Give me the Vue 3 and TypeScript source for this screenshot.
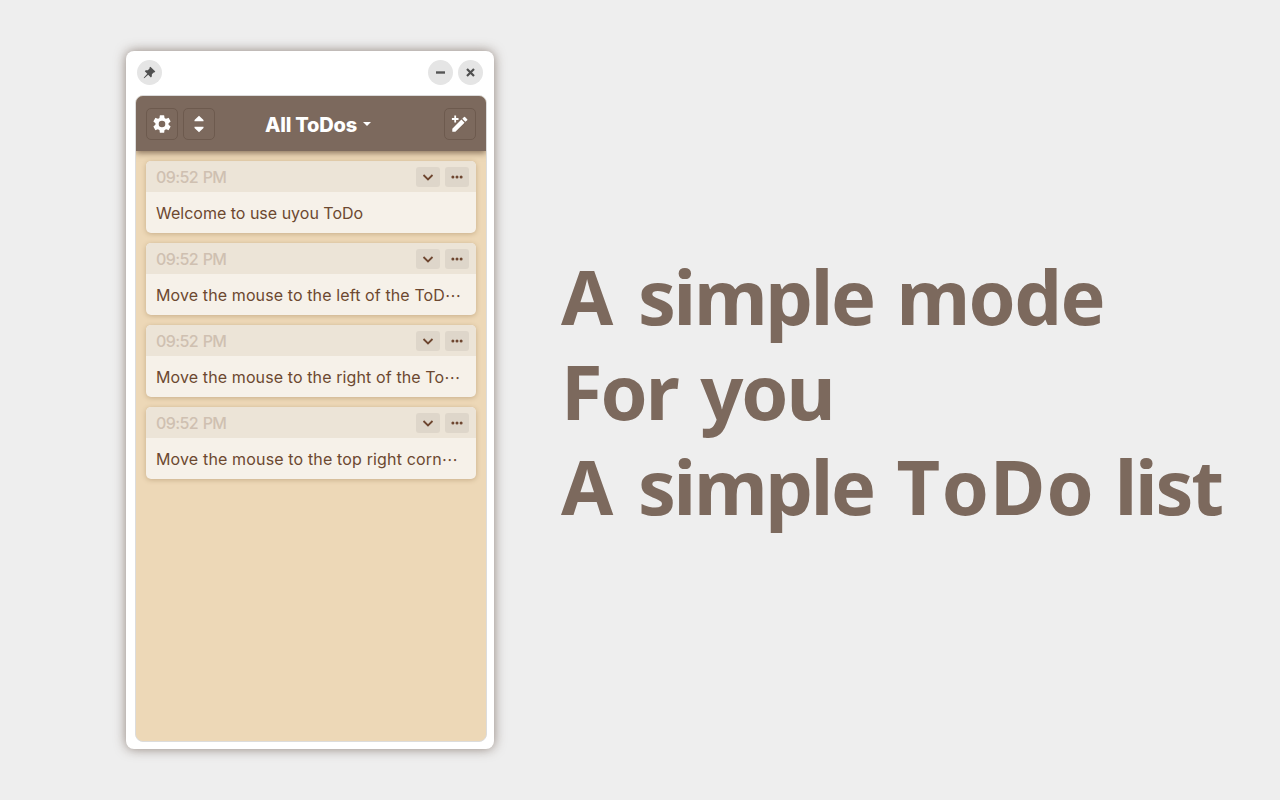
<script setup lang="ts">
interface Todo {
  time: string
  text: string
  cut: boolean
}

const todos: Todo[] = [
  { time: '09:52 PM', text: 'Welcome to use uyou ToDo', cut: false },
  { time: '09:52 PM', text: 'Move the mouse to the left of the ToD', cut: true },
  { time: '09:52 PM', text: 'Move the mouse to the right of the To', cut: true },
  { time: '09:52 PM', text: 'Move the mouse to the top right corn', cut: true },
]
</script>

<template>
  <main class="page">
    <section class="window">
      <div class="titlebar">
        <button class="round">
          <svg width="13" height="13" viewBox="0 0 13 13">
            <path d="M7.4 .7 12.3 5.6 11.3 6.6 10.7 6.4 8.9 8.3 8.8 10.5 7.9 11.4 5.2 8.7 1.5 12.1 .8 12.2 .9 11.5 4.3 7.8 1.8 5.3 2.7 4.3 4.9 4.2 6.7 2.3 6.4 1.7Z" fill="#4f4f4f" />
          </svg>
        </button>
        <span class="spacer" />
        <button class="round">
          <svg width="11" height="11" viewBox="0 0 11 11"><path d="M1 5.5h9" stroke="#555" stroke-width="2.4" /></svg>
        </button>
        <button class="round">
          <svg width="11" height="11" viewBox="0 0 11 11"><path d="M2 2l7 7M9 2l-7 7" stroke="#4f4f4f" stroke-width="2.2" /></svg>
        </button>
      </div>

      <div class="app">
        <header class="bar">
          <div class="side">
            <button class="tool">
              <svg width="22" height="22" viewBox="0 0 24 24">
                <path fill="#fff" d="M19.14 12.94c.04-.3.06-.61.06-.94s-.02-.64-.07-.94l2.03-1.58a.49.49 0 0 0 .12-.61l-1.92-3.32a.49.49 0 0 0-.59-.22l-2.39.96c-.5-.38-1.03-.7-1.62-.94L14.4 2.81a.48.48 0 0 0-.48-.41h-3.84a.47.47 0 0 0-.47.41l-.36 2.54c-.59.24-1.13.57-1.62.94l-2.39-.96a.47.47 0 0 0-.59.22L2.74 8.87a.47.47 0 0 0 .12.61l2.03 1.58c-.05.3-.09.63-.09.94s.02.64.07.94l-2.03 1.58a.49.49 0 0 0-.12.61l1.92 3.32c.12.22.37.29.59.22l2.39-.96c.5.38 1.03.7 1.62.94l.36 2.54c.05.24.24.41.48.41h3.84c.24 0 .44-.17.47-.41l.36-2.54c.59-.24 1.13-.56 1.62-.94l2.39.96c.22.08.47 0 .59-.22l1.92-3.32a.47.47 0 0 0-.12-.61zM12 15.6a3.6 3.6 0 1 1 0-7.2 3.6 3.6 0 0 1 0 7.2z" />
              </svg>
            </button>
            <button class="tool">
              <svg width="20" height="20" viewBox="0 0 20 20">
                <path fill="#fff" d="M10 1.8 14.5 6V7.2H5.5V6ZM10 18.2 14.5 14V12.8H5.5V14Z" />
              </svg>
            </button>
          </div>
          <h1 class="heading">
            <span class="name">All ToDos</span>
            <svg width="8" height="4" viewBox="0 0 8 4"><path fill="#fff" d="M0 0h8L4 4z" /></svg>
          </h1>
          <button class="tool">
            <svg width="20" height="20" viewBox="0 0 20 20">
              <path fill="#fff" d="M1.9 4.1h2.4V1.6h1.8v2.5h2.4v1.8H6.1v2.5H4.3V5.9H1.9ZM2.3 14.7 11.4 5.6 14.5 8.7 5.4 17.8H2.3ZM12.3 4.7 14 3Q14.5 2.5 15 3L17.2 5.2Q17.7 5.7 17.2 6.2L15.4 7.8Z" />
            </svg>
          </button>
        </header>

        <div class="list">
          <article v-for="todo in todos" :key="todo.text" class="card">
            <div class="card-head">
              <time class="time">{{ todo.time }}</time>
              <span class="actions">
                <button class="mini">
                  <svg width="12" height="12" viewBox="0 0 12 12"><path d="M1.5 4 6 8.4 10.5 4" fill="none" stroke="#6e4630" stroke-width="1.8" /></svg>
                </button>
                <button class="mini">
                  <svg width="12" height="12" viewBox="0 0 12 12" fill="#6e4630"><circle cx="1.9" cy="6" r="1.5" /><circle cx="6" cy="6" r="1.5" /><circle cx="10.1" cy="6" r="1.5" /></svg>
                </button>
              </span>
            </div>
            <p class="card-text" :class="{ cut: todo.cut }"><span>{{ todo.text }}</span><span v-if="todo.cut" class="dots" lang="zh-CN">…</span></p>
          </article>
        </div>
      </div>
    </section>

    <section class="slogan">
      <div>A <span class="w-simple">simple</span> <span class="w-mode">mode</span></div>
      <div><span class="w-for">For</span> <span class="w-you">you</span></div>
      <div>A <span class="w-simple">simple</span> <span class="w-todo"><span class="cap">T</span>oDo</span> <span class="w-list">list</span></div>
    </section>
  </main>
</template>

<style>
body { margin: 0; background: #eee; }
</style>

<style scoped>
* { box-sizing: border-box; }
button { padding: 0; border: 0; display: flex; align-items: center; justify-content: center; }
svg { display: block; flex: none; }
.page {
  width: 1280px; height: 800px; background: #eee; overflow: hidden;
  display: flex; align-items: flex-start; padding: 51px 0 0 126px;
  font-family: Inter, "Noto Sans CJK SC", sans-serif;
}
.window {
  flex: none; width: 368px; height: 698px; background: #fff; border-radius: 8px;
  box-shadow: 0 0 12px rgba(85, 65, 52, .62);
}
.titlebar { height: 44px; padding: 9px 11px 0; display: flex; gap: 5px; }
.round { width: 25px; height: 25px; border-radius: 50%; background: #e5e5e5; }
.spacer { flex: 1; }
.app {
  width: 352px; height: 647px; margin-left: 9px; border: 1px solid #dcdcdc;
  border-radius: 8px; background: #edd8b7; overflow: hidden;
}
.bar {
  height: 55px; padding: 0 10px; background: #7c695d; position: relative;
  display: flex; align-items: center; justify-content: space-between;
  box-shadow: 0 2px 6px rgba(70, 45, 30, .6);
}
.side { display: flex; gap: 5px; width: 69px; }
.tool { width: 32px; height: 32px; border: 1px solid #6d5a4e; border-radius: 5px; background: transparent; }
.heading {
  margin: 2px auto 0 50px; display: flex; align-items: center; gap: 6px;
  color: #fff; font-size: 20px; line-height: 24px; font-weight: 800;
}
.heading svg { margin-bottom: 1px; }
.name { white-space: nowrap; letter-spacing: -.2px; }
.list { padding: 10px; display: flex; flex-direction: column; gap: 10px; }
.card {
  height: 72px; border-radius: 5px; background: #f6f1e9; overflow: hidden;
  box-shadow: 0 1px 5px rgba(120, 85, 40, .32);
}
.card-head {
  height: 31px; padding: 0 7px 0 10px; background: #ece4d7;
  display: flex; align-items: center; justify-content: space-between;
}
.time { font-size: 16px; line-height: 20px; font-weight: 500; color: #cfc0b1; letter-spacing: -.6px; word-spacing: 1px; }
.actions { display: flex; gap: 5px; padding-top: 1px; }
.mini { width: 24px; height: 20px; border-radius: 3px; background: #ded6ca; }
.card-text {
  margin: 0; padding: 11px 10px 0; font-size: 16px; line-height: 20px; color: #6c4830;
  white-space: nowrap; display: flex;
}
.cut { letter-spacing: .11px; }
.card:last-child .cut { letter-spacing: .15px; }
.dots { font-family: "Noto Sans CJK SC", sans-serif; }
.slogan {
  margin: 197px 0 0 67px; color: #7c695d; font-family: "Noto Sans", sans-serif;
  font-size: 75.6px; font-weight: 700; line-height: 95px; white-space: nowrap;
}
.w-simple { letter-spacing: -2.3px; margin-left: 5px; }
.w-mode { letter-spacing: -1.6px; margin-left: 3px; }
.w-for { letter-spacing: -2px; }
.w-you { letter-spacing: -2px; margin-left: 3px; }
.w-todo { letter-spacing: 1.2px; margin-left: 3px; }
.cap { letter-spacing: 1.5px; }
.w-list { letter-spacing: -2.2px; margin-left: 0; }
</style>
